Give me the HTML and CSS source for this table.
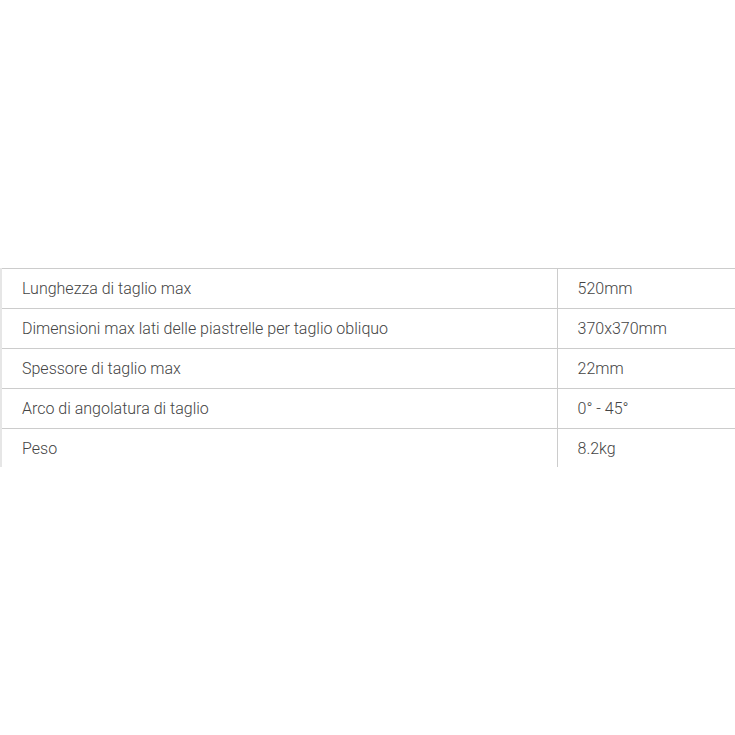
FILE: index.html
```html
<!DOCTYPE html>
<html lang="it">
<head>
<meta charset="utf-8">
<link rel="stylesheet" href="styles.css">
</head>
<body>
<div class="wrap">
<table class="specs">
<tbody>
<tr><td class="label">Lunghezza di taglio max</td><td class="value">520mm</td></tr>
<tr><td class="label">Dimensioni max lati delle piastrelle per taglio obliquo</td><td class="value">370x370mm</td></tr>
<tr><td class="label">Spessore di taglio max</td><td class="value">22mm</td></tr>
<tr><td class="label">Arco di angolatura di taglio</td><td class="value">0° - 45°</td></tr>
<tr><td class="label">Peso</td><td class="value">8.2kg</td></tr>
</tbody>
</table>
</div>
</body>
</html>
```
FILE: styles.css
```css
html, body {
  margin: 0;
  padding: 0;
  background: #fff;
}
.wrap {
  padding-top: 268px;
}
.specs {
  width: 100%;
  border-collapse: collapse;
  table-layout: fixed;
  font-family: Roboto, "Liberation Sans", sans-serif;
  font-weight: 300;
  font-size: 16px;
  color: #444;
  border-left: 2px solid #e6e6e6;
}
.specs td {
  height: 40px;
  padding: 0 0 0 20px;
  border-top: 1px solid #cccccc;
  vertical-align: middle;
  box-sizing: border-box;
}
.specs tr:last-child td {
  height: 38px;
  padding-top: 1px;
}
.specs .label {
  width: 556px;
  border-right: 1px solid #cccccc;
}
.specs .value {
  padding-left: 20px;
}
```
